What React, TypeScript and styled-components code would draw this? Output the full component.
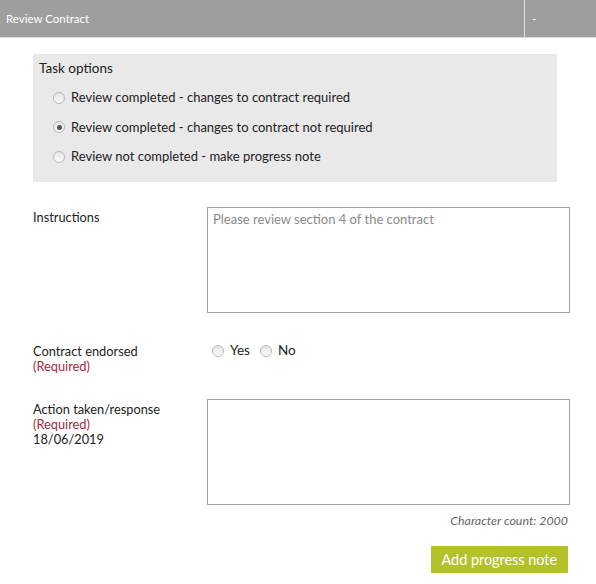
import React, { useState } from "react";
import styled, { createGlobalStyle } from "styled-components";

const GlobalStyle = createGlobalStyle`
  html, body {
    margin: 0;
    padding: 0;
    background: #ffffff;
  }
  body {
    font-family: "Lato", "Noto Sans", Arial, sans-serif;
    color: #222;
  }
`;

const Page = styled.div`
  width: 596px;
`;

const Header = styled.div`
  height: 37px;
  background: #9e9e9e;
  border-bottom: 1px solid #dcdcdc;
  display: flex;
  align-items: stretch;
  color: #fff;
  font-size: 11.5px;
`;

const HeaderTitle = styled.div`
  flex: 1;
  display: flex;
  align-items: center;
  padding-left: 6px;
`;

const HeaderAction = styled.div`
  width: 64px;
  border-left: 1px solid #e2e2e2;
  display: flex;
  align-items: center;
  padding-left: 7px;
  font-size: 12px;
`;

const Body = styled.div`
  padding: 16px 26px 0 33px;
`;

const OptionsPanel = styled.fieldset`
  margin: 0 13px 0 0;
  border: none;
  background: #e9e9e9;
  padding: 6px 6px 14px 6px;
  height: 128px;
  box-sizing: border-box;
`;

const PanelTitle = styled.div`
  font-size: 13.5px;
  color: #222;
  margin-bottom: 12px;
`;

const OptionList = styled.div`
  display: flex;
  flex-direction: column;
  gap: 10px;
  padding-left: 14px;
`;

const RadioLabel = styled.label<{ $size?: number }>`
  display: inline-flex;
  align-items: center;
  gap: 6px;
  font-size: ${(p) => p.$size ?? 13}px;
  color: #222;
  cursor: pointer;
  line-height: 19.5px;
`;

const Radio = styled.input.attrs({ type: "radio" })`
  appearance: none;
  -webkit-appearance: none;
  margin: 0;
  width: 12px;
  height: 12px;
  border-radius: 50%;
  border: 1px solid #b8b8b8;
  background: linear-gradient(#e4e4e4, #fbfbfb);
  position: relative;
  flex-shrink: 0;
  &:checked::after {
    content: "";
    position: absolute;
    left: 2.5px;
    top: 2.5px;
    width: 5px;
    height: 5px;
    border-radius: 50%;
    background: #555;
  }
`;

const Row = styled.div<{ $top: number }>`
  display: flex;
  margin-top: ${(p) => p.$top}px;
`;

const Label = styled.div`
  width: 174px;
  flex-shrink: 0;
  font-size: 12.8px;
  line-height: 15px;
  color: #222;
  padding-top: 3px;
`;

const Required = styled.div`
  color: #a8283e;
`;

const Field = styled.div`
  flex: 1;
  display: flex;
  flex-direction: column;
`;

const TextArea = styled.textarea`
  width: 100%;
  height: 106px;
  box-sizing: border-box;
  border: 1px solid #a3a3a3;
  resize: none;
  padding: 3px 5px;
  font-family: inherit;
  font-size: 13px;
  color: #222;
  outline: none;
  &::placeholder {
    color: #8a8a8a;
  }
`;

const InlineRadios = styled.div`
  display: flex;
  gap: 10px;
  padding-left: 5px;
`;

const CharCount = styled.div`
  text-align: right;
  font-style: italic;
  font-size: 12.4px;
  color: #666;
  margin-top: 8px;
  padding-right: 2px;
`;

const Actions = styled.div`
  display: flex;
  justify-content: flex-end;
  margin-top: 18px;
  padding-right: 2px;
`;

const Button = styled.button`
  background: #b3c22a;
  color: #fff;
  border: none;
  height: 27px;
  padding: 0 11px;
  font-family: inherit;
  font-size: 14.4px;
  cursor: pointer;
`;

const options = [
  "Review completed - changes to contract required",
  "Review completed - changes to contract not required",
  "Review not completed - make progress note",
];

export default function App() {
  const [task, setTask] = useState(1);
  const [endorsed, setEndorsed] = useState<string | null>(null);
  return (
    <Page>
      <GlobalStyle />
      <Header>
        <HeaderTitle>Review Contract</HeaderTitle>
        <HeaderAction>-</HeaderAction>
      </Header>
      <Body>
        <OptionsPanel>
          <PanelTitle>Task options</PanelTitle>
          <OptionList>
            {options.map((o, i) => (
              <RadioLabel key={o}>
                <Radio name="task" checked={task === i} onChange={() => setTask(i)} />
                {o}
              </RadioLabel>
            ))}
          </OptionList>
        </OptionsPanel>

        <Row $top={25}>
          <Label>Instructions</Label>
          <Field>
            <TextArea placeholder="Please review section 4 of the contract" />
          </Field>
        </Row>

        <Row $top={28}>
          <Label>
            Contract endorsed
            <Required>(Required)</Required>
          </Label>
          <Field>
            <InlineRadios>
              <RadioLabel $size={13.5}>
                <Radio name="endorsed" checked={endorsed === "yes"} onChange={() => setEndorsed("yes")} />
                Yes
              </RadioLabel>
              <RadioLabel $size={13.5}>
                <Radio name="endorsed" checked={endorsed === "no"} onChange={() => setEndorsed("no")} />
                No
              </RadioLabel>
            </InlineRadios>
          </Field>
        </Row>

        <Row $top={25}>
          <Label>
            Action taken/response
            <Required>(Required)</Required>
            18/06/2019
          </Label>
          <Field>
            <TextArea />
            <CharCount>Character count: 2000</CharCount>
          </Field>
        </Row>

        <Actions>
          <Button>Add progress note</Button>
        </Actions>
      </Body>
    </Page>
  );
}
